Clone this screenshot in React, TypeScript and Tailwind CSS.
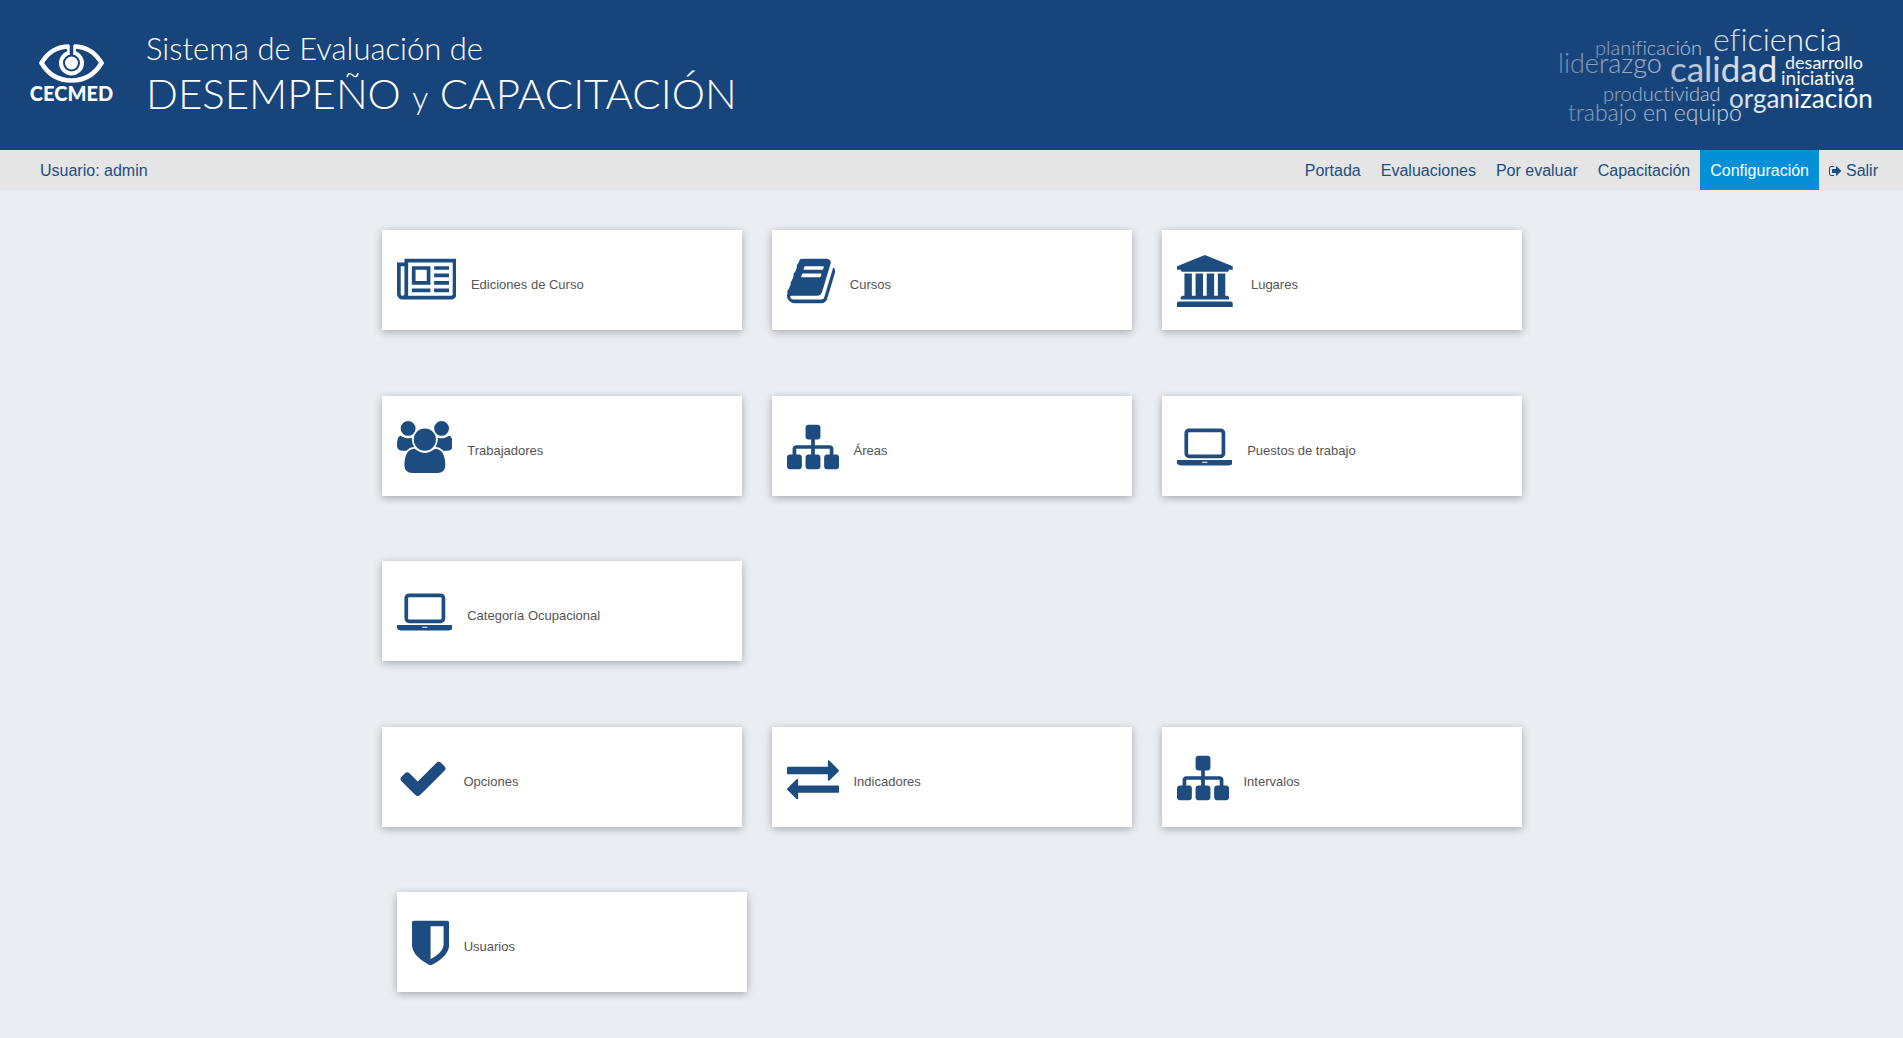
import React from "react";

type Glyph = { width: number; d: string };

const glyphs = {
  newspaper: {
    width: 2048,
    d: "M1024 1024h-384v-384h384v384zM1152 384v-128h-640v128h640zM1152 1152v-640h-640v640h640zM1792 384v-128h-512v128h512zM1792 640v-128h-512v128h512zM1792 896v-128h-512v128h512zM1792 1152v-128h-512v128h512zM256 192v960h-128v-960q0 -26 19 -45t45 -19t45 19t19 45zM1920 192v1088h-1536v-1088q0 -33 -11 -64h1483q26 0 45 19t19 45zM2048 1408v-1216q0 -80 -56 -136t-136 -56h-1664q-80 0 -136 56t-56 136v1088h256v128h1792z",
  },
  book: {
    width: 1664,
    d: "M1639 1058q40 -57 18 -129l-275 -906q-19 -64 -76.5 -107.5t-122.5 -43.5h-923q-77 0 -148.5 53.5t-99.5 131.5q-24 67 -2 127q0 4 3 27t4 37q1 8 -3 21.5t-3 19.5q2 11 8 21t16.5 23.5t16.5 23.5q23 38 45 91.5t30 91.5q3 10 0.5 30t-0.5 28q3 11 17 28t17 23q21 36 42 92t25 90q1 9 -2.5 32t0.5 28q4 13 22 30.5t22 22.5q19 26 42.5 84.5t27.5 96.5q1 8 -3 25.5t-2 26.5q2 8 9 18t18 23t17 21q8 12 16.5 30.5t15 35t16 36t19.5 32t26.5 23.5t36 11.5t47.5 -5.5l-1 -3q38 9 51 9h761q74 0 114 -56t18 -130l-274 -906q-36 -119 -71.5 -153.5t-128.5 -34.5h-869q-27 0 -38 -15q-11 -16 -1 -43q24 -70 144 -70h923q29 0 56 15.5t35 41.5l300 987q7 22 5 57q38 -15 59 -43zM575 1056q-4 -13 2 -22.5t20 -9.5h608q13 0 25.5 9.5t16.5 22.5l21 64q4 13 -2 22.5t-20 9.5h-608q-13 0 -25.5 -9.5t-16.5 -22.5zM492 800q-4 -13 2 -22.5t20 -9.5h608q13 0 25.5 9.5t16.5 22.5l21 64q4 13 -2 22.5t-20 9.5h-608q-13 0 -25.5 -9.5t-16.5 -22.5z",
  },
  university: {
    width: 2048,
    d: "M960 1536l960 -384v-128h-128q0 -26 -20.5 -45t-48.5 -19h-1526q-28 0 -48.5 19t-20.5 45h-128v128zM256 896h256v-768h128v768h256v-768h128v768h256v-768h128v768h256v-768h59q28 0 48.5 -19t20.5 -45v-64h-1664v64q0 26 20.5 45t48.5 19h59v768zM1851 -64q28 0 48.5 -19t20.5 -45v-128h-1920v128q0 26 20.5 45t48.5 19h1782z",
  },
  users: {
    width: 1920,
    d: "M593 640q-162 -5 -265 -128h-134q-82 0 -138 40.5t-56 118.5q0 353 124 353q6 0 43.5 -21t97.5 -42.5t119 -21.5q67 0 133 23q-5 -37 -5 -66q0 -139 81 -256zM1664 3q0 -120 -73 -189.5t-194 -69.5h-874q-121 0 -194 69.5t-73 189.5q0 53 3.5 103.5t14 109t26.5 108.5t43 97.5t62 81t85.5 53.5t111.5 20q10 0 43 -21.5t73 -48t107 -48t135 -21.5t135 21.5t107 48t73 48t43 21.5q61 0 111.5 -20t85.5 -53.5t62 -81t43 -97.5t26.5 -108.5t14 -109t3.5 -103.5zM640 1280q0 -106 -75 -181t-181 -75t-181 75t-75 181t75 181t181 75t181 -75t75 -181zM1344 896q0 -159 -112.5 -271.5t-271.5 -112.5t-271.5 112.5t-112.5 271.5t112.5 271.5t271.5 112.5t271.5 -112.5t112.5 -271.5zM1920 671q0 -78 -56 -118.5t-138 -40.5h-134q-103 123 -265 128q81 117 81 256q0 29 -5 66q66 -23 133 -23q59 0 119 21.5t97.5 42.5t43.5 21q124 0 124 -353zM1792 1280q0 -106 -75 -181t-181 -75t-181 75t-75 181t75 181t181 75t181 -75t75 -181z",
  },
  sitemap: {
    width: 1792,
    d: "M1792 288v-320q0 -40 -28 -68t-68 -28h-320q-40 0 -68 28t-28 68v320q0 40 28 68t68 28h96v192h-512v-192h96q40 0 68 -28t28 -68v-320q0 -40 -28 -68t-68 -28h-320q-40 0 -68 28t-28 68v320q0 40 28 68t68 28h96v192h-512v-192h96q40 0 68 -28t28 -68v-320q0 -40 -28 -68t-68 -28h-320q-40 0 -68 28t-28 68v320q0 40 28 68t68 28h96v192q0 52 38 90t90 38h512v192h-96q-40 0 -68 28t-28 68v320q0 40 28 68t68 28h320q40 0 68 -28t28 -68v-320q0 -40 -28 -68t-68 -28h-96v-192h512q52 0 90 -38t38 -90v-192h96q40 0 68 -28t28 -68z",
  },
  laptop: {
    width: 1920,
    d: "M416 256q-66 0 -113 47t-47 113v704q0 66 47 113t113 47h1088q66 0 113 -47t47 -113v-704q0 -66 -47 -113t-113 -47h-1088zM384 1120v-704q0 -13 9.5 -22.5t22.5 -9.5h1088q13 0 22.5 9.5t9.5 22.5v704q0 13 -9.5 22.5t-22.5 9.5h-1088q-13 0 -22.5 -9.5t-9.5 -22.5zM1760 192h160v-96q0 -40 -47 -68t-113 -28h-1600q-66 0 -113 28t-47 68v96h160h1600zM1040 96q16 0 16 16t-16 16h-160q-16 0 -16 -16t16 -16h160z",
  },
  check: {
    width: 1792,
    d: "M1671 970q0 -40 -28 -68l-724 -724l-136 -136q-28 -28 -68 -28t-68 28l-136 136l-362 362q-28 28 -28 68t28 68l136 136q28 28 68 28t68 -28l294 -295l656 657q28 28 68 28t68 -28l136 -136q28 -28 28 -68z",
  },
  exchange: {
    width: 1792,
    d: "M1792 352v-192q0 -13 -9.5 -22.5t-22.5 -9.5h-1376v-192q0 -13 -9.5 -22.5t-22.5 -9.5q-12 0 -24 10l-319 320q-9 9 -9 22q0 14 9 23l320 320q9 9 23 9q13 0 22.5 -9.5t9.5 -22.5v-192h1376q13 0 22.5 -9.5t9.5 -22.5zM1792 896q0 -14 -9 -23l-320 -320q-9 -9 -23 -9q-13 0 -22.5 9.5t-9.5 22.5v192h-1376q-13 0 -22.5 9.5t-9.5 22.5v192q0 13 9.5 22.5t22.5 9.5h1376v192q0 14 9 23t23 9q12 0 24 -10l319 -319q9 -9 9 -23z",
  },
  shield: {
    width: 1280,
    d: "M1088 576v640h-448v-1137q119 63 213 137q235 184 235 360zM1280 1344v-768q0 -86 -33.5 -170.5t-83 -150t-118 -127.5t-126.5 -103t-121 -77.5t-89.5 -49.5t-42.5 -20q-12 -6 -26 -6t-26 6q-16 7 -42.5 20t-89.5 49.5t-121 77.5t-126.5 103t-118 127.5t-83 150t-33.5 170.5v768q0 26 19 45t45 19h1152q26 0 45 -19t19 -45z",
  },
  signOut: {
    width: 1664,
    d: "M640 96q0 -4 1 -20t0.5 -26.5t-3 -23.5t-10 -19.5t-20.5 -6.5h-320q-119 0 -203.5 84.5t-84.5 203.5v704q0 119 84.5 203.5t203.5 84.5h320q13 0 22.5 -9.5t9.5 -22.5q0 -4 1 -20t0.5 -26.5t-3 -23.5t-10 -19.5t-20.5 -6.5h-320q-66 0 -113 -47t-47 -113v-704q0 -66 47 -113t113 -47h288h11h13t11.5 -1t11.5 -3t8 -5.5t7 -9t2 -13.5zM1568 640q0 -26 -19 -45l-544 -544q-19 -19 -45 -19t-45 19t-19 45v288h-448q-26 0 -45 19t-19 45v384q0 26 19 45t45 19h448v288q0 26 19 45t45 19t45 -19l544 -544q19 -19 19 -45z",
  },
} satisfies Record<string, Glyph>;

type IconName = keyof typeof glyphs;

function Icon({ name, className }: { name: IconName; className: string }) {
  const glyph = glyphs[name];
  return (
    <svg viewBox={`0 -1536 ${glyph.width} 1792`} className={className} fill="currentColor" aria-hidden="true">
      <path transform="scale(1,-1)" d={glyph.d} />
    </svg>
  );
}

type Item = { icon: IconName; label: string };

const rows: Item[][] = [
  [
    { icon: "newspaper", label: "Ediciones de Curso" },
    { icon: "book", label: "Cursos" },
    { icon: "university", label: "Lugares" },
  ],
  [
    { icon: "users", label: "Trabajadores" },
    { icon: "sitemap", label: "Áreas" },
    { icon: "laptop", label: "Puestos de trabajo" },
  ],
  [{ icon: "laptop", label: "Categoría Ocupacional" }],
  [
    { icon: "check", label: "Opciones" },
    { icon: "exchange", label: "Indicadores" },
    { icon: "sitemap", label: "Intervalos" },
  ],
];

function Card({ icon, label }: Item) {
  return (
    <div className="px-[15px]">
      <a
        href="#"
        className="flex h-[100px] items-start gap-[15px] bg-white px-[15px] pt-[25px] text-[13px] leading-5 text-[#555] shadow-[0_2px_8px_rgba(0,0,0,0.3)]"
      >
        <Icon name={icon} className="h-[52px] w-auto shrink-0 text-[#1d4d80]" />
        <span className="pt-5">{label}</span>
      </a>
    </div>
  );
}

function Logo() {
  return (
    <svg viewBox="0 0 92 70" className="h-[70px] w-[92px] shrink-0" role="img" aria-label="CECMED">
      <path
        d="M43 8.500C31 8.500 22 14 15.500 25C22 36 32 42.500 45.500 42.500S69 36 75.500 25C69 14 60 8.500 48 8.500"
        fill="none"
        stroke="#fff"
        strokeWidth="4.500"
        strokeLinejoin="miter"
      />
      <circle cx="45.500" cy="25" r="10.500" fill="none" stroke="#fff" strokeWidth="4" />
      <path d="M42.500 7v10M48.500 7v10" stroke="#fff" strokeWidth="3" />
      <path d="M45.500 5v16" stroke="#17447a" strokeWidth="3.500" />
      <circle cx="45.500" cy="25" r="6.500" fill="#fff" />
      <text x="45.500" y="63" textAnchor="middle" fill="#fff" fontFamily="Lato, sans-serif" fontWeight="900" fontSize="20">
        CECMED
      </text>
    </svg>
  );
}

const cloud = [
  { text: "planificación", x: 54, y: 35, size: 20 },
  { text: "eficiencia", x: 172, y: 31, size: 32 },
  { text: "liderazgo", x: 17, y: 53, size: 27 },
  { text: "calidad", x: 129, y: 62, size: 35, weight: 400 },
  { text: "desarrollo", x: 244, y: 49, size: 18, weight: 400 },
  { text: "iniciativa", x: 240, y: 65, size: 19, weight: 400 },
  { text: "productividad", x: 62, y: 81, size: 20 },
  { text: "organización", x: 188, y: 88, size: 26, weight: 400 },
  { text: "trabajo en equipo", x: 27, y: 101, size: 23 },
];

function WordCloud() {
  return (
    <svg
      viewBox="0 0 340 110"
      className="h-[110px] w-[340px] shrink-0 [font-variant-ligatures:none]"
      fontFamily="Lato, sans-serif"
    >
      <defs>
        <linearGradient id="fade" gradientUnits="userSpaceOnUse" x1="0" y1="0" x2="280" y2="0">
          <stop offset="0" stopColor="#fff" stopOpacity="0.35" />
          <stop offset="1" stopColor="#fff" />
        </linearGradient>
      </defs>
      {cloud.map((w) => (
        <text key={w.text} x={w.x} y={w.y} fontSize={w.size} fontWeight={w.weight ?? 300} fill="url(#fade)">
          {w.text}
        </text>
      ))}
    </svg>
  );
}

const links = ["Portada", "Evaluaciones", "Por evaluar", "Capacitación", "Configuración"];

export default function App() {
  return (
    <div className="min-h-screen bg-[#eaeef3] font-['Liberation_Sans',Arial,sans-serif]">
      <header className="flex h-[150px] items-start justify-between bg-[#17447a] pl-[26px] pr-[22px] text-white">
        <div className="flex items-start gap-7">
          <div className="pt-[38px]">
            <Logo />
          </div>
          <h1 className="pt-7 font-['Lato',sans-serif] font-light whitespace-nowrap">
            <span className="block text-[31px] leading-10">Sistema de Evaluación de</span>
            <span className="block text-[42px] leading-[50px]">
              DESEMPEÑO <span className="text-[32px]">y</span> CAPACITACIÓN
            </span>
          </h1>
        </div>
        <div className="pt-5">
          <WordCloud />
        </div>
      </header>
      <nav className="flex h-10 items-center justify-between bg-[#e5e5e5] pl-10 pr-[15px] text-base text-[#1d4d80]">
        <span className="pt-0.5">Usuario: admin</span>
        <ul className="flex h-full">
          {links.map((label) => (
            <li key={label}>
              <a
                href="#"
                className={
                  label === "Configuración"
                    ? "flex h-full items-center bg-[#058fd7] px-[10px] pt-0.5 text-white"
                    : "flex h-full items-center px-[10px] pt-0.5"
                }
              >
                {label}
              </a>
            </li>
          ))}
          <li>
            <a href="#" className="flex h-full items-center gap-1 px-[10px] pt-0.5">
              <Icon name="signOut" className="h-[14px] w-auto" />
              Salir
            </a>
          </li>
        </ul>
      </nav>
      <main className="mx-auto max-w-[1170px] pt-10">
        {rows.map((items, i) => (
          <div key={i} className="grid grid-cols-3 odd:mb-[66px] even:mb-[65px]">
            {items.map((item) => (
              <Card key={item.label} {...item} />
            ))}
          </div>
        ))}
        <div className="grid grid-cols-3 px-[15px]">
          <Card icon="shield" label="Usuarios" />
        </div>
      </main>
    </div>
  );
}
